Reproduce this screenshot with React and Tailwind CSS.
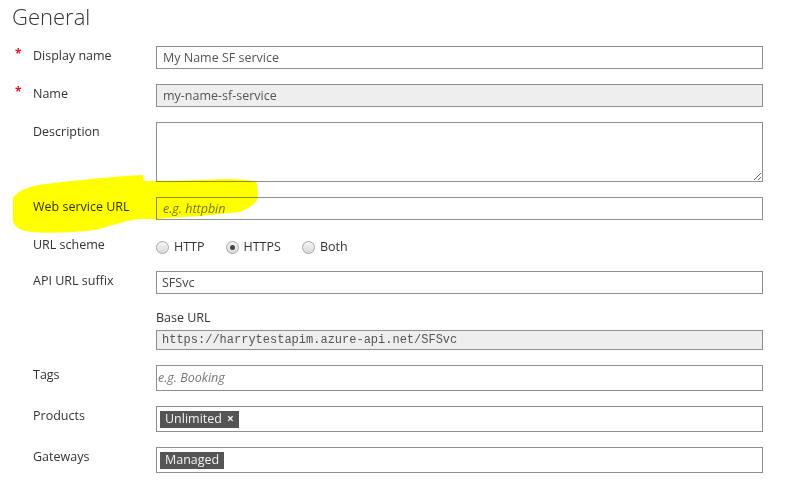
import React from "react";

const font = { fontFamily: '"Open Sans", "Noto Sans", sans-serif' };

function Label({ children, required }) {
  return (
    <div className="relative w-[156px] shrink-0 pl-[33px] pt-px text-[12.5px] leading-[18px] text-[#333]">
      {required && (
        <span className="absolute left-[15px] top-[2px] text-[12px] font-bold leading-[12px] text-[#e81123]">*</span>
      )}
      {children}
    </div>
  );
}

function Box({ className = "", children }) {
  return (
    <div className={"flex w-[607px] items-center border border-[#8f8f8f] " + className}>{children}</div>
  );
}

function Radio({ checked, label }) {
  return (
    <div className="flex items-center">
      <span className="flex h-[13px] w-[13px] items-center justify-center rounded-full border border-[#a6a6a6] bg-gradient-to-b from-[#f4f4f4] to-[#dadada]">
        {checked && <span className="h-[5px] w-[5px] rounded-full bg-[#444]" />}
      </span>
      <span className="ml-[5px] text-[12.5px] text-[#333]">{label}</span>
    </div>
  );
}

export default function App() {
  return (
    <div className="relative h-[497px] w-[794px] overflow-hidden bg-white" style={font}>
      <h1 className="pl-[12px] pt-[1px] text-[22px] font-light leading-[30px] text-[#333]">General</h1>
      <div className="mt-[15px] flex flex-col gap-[15px]">
        <div className="flex">
          <Label required>Display name</Label>
          <Box className="h-[23px] px-[6px] pt-[2px] text-[12.5px] text-[#555]">My Name SF service</Box>
        </div>
        <div className="flex">
          <Label required>Name</Label>
          <Box className="h-[23px] bg-[#eeeeee] px-[6px] pt-[2px] text-[12.5px] text-[#555]">my-name-sf-service</Box>
        </div>
        <div className="flex">
          <Label>Description</Label>
          <textarea
            readOnly
            className="block h-[60px] w-[607px] resize-y border border-[#8f8f8f] outline-none"
          />
        </div>
        <div className="flex">
          <Label>Web service URL</Label>
          <Box className="h-[23px] px-[6px] pt-[2px] text-[12.5px] italic text-[#777]">e.g. httpbin</Box>
        </div>
        <div className="flex h-[21px]">
          <Label>URL scheme</Label>
          <div className="flex items-center gap-[21px] pt-[3px]">
            <Radio label="HTTP" />
            <Radio checked label="HTTPS" />
            <Radio label="Both" />
          </div>
        </div>
        <div className="flex">
          <Label>API URL suffix</Label>
          <Box className="h-[23px] px-[5px] pt-[1px] text-[12.5px] text-[#444]">SFSvc</Box>
        </div>
        <div className="flex">
          <div className="w-[156px] shrink-0" />
          <div className="flex flex-col">
            <div className="text-[12.5px] leading-[17px] text-[#333]">Base URL</div>
            <Box className="mt-[4px] h-[20px] bg-[#eeeeee] px-[5px] text-[12px] text-[#555]">
              <span style={{ fontFamily: '"Liberation Mono", monospace' }}>https://harrytestapim.azure-api.net/SFSvc</span>
            </Box>
          </div>
        </div>
        <div className="flex">
          <Label>Tags</Label>
          <Box className="h-[26px] px-[1px] pt-[1px] text-[12.5px] italic text-[#777]">e.g. Booking</Box>
        </div>
        <div className="flex">
          <Label>Products</Label>
          <Box className="h-[26px] px-[3px]">
            <span className="flex h-[17px] items-center bg-[#555] px-[5px] text-[12.5px] text-[#f2f2f2]">
              Unlimited <span className="ml-[5px] text-[12px] font-bold">×</span>
            </span>
          </Box>
        </div>
        <div className="flex">
          <Label>Gateways</Label>
          <Box className="h-[26px] px-[3px]">
            <span className="flex h-[17px] items-center bg-[#555] px-[5px] text-[12.5px] text-[#f2f2f2]">Managed</span>
          </Box>
        </div>
      </div>
      <svg
        className="pointer-events-none absolute left-0 top-0 mix-blend-multiply"
        width="794"
        height="497"
        viewBox="0 0 794 497"
      >
        <path
          d="M13,198 C18,190 30,186 45,184 C70,181 100,178 125,176 L143,175 L144,181 C170,181 200,180 227,179 C240,179 252,180 257,183 L258,198 C255,204 250,208 240,212 L200,216 C180,217 165,218 157,219 L140,219 C128,220 110,226 95,230 C70,233 40,234 25,231 C15,228 12,224 13,215 Z"
          fill="#ffff00"
        />
      </svg>
    </div>
  );
}
